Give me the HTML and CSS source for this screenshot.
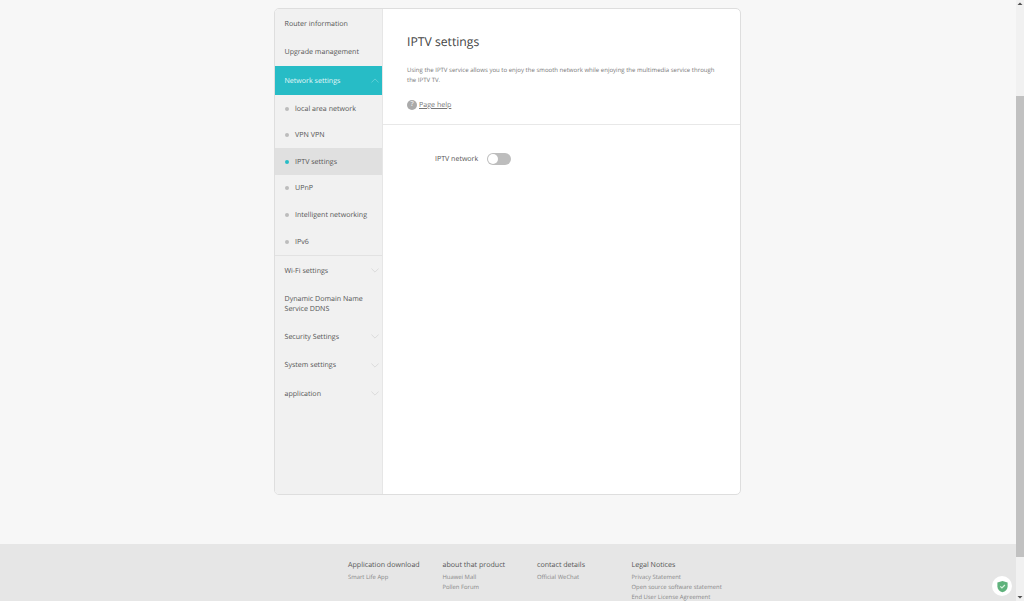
FILE: index.html
```html
<!DOCTYPE html>
<html lang="en">
<head>
  <meta charset="UTF-8">
  <meta name="viewport" content="width=device-width, initial-scale=1.0">
  <title>IPTV settings</title>
  <link rel="stylesheet" href="styles.css">
</head>
<body>

  <div class="page">
    <main class="main">
      <div class="card">
        <nav class="sidebar">
          <a class="nav-item">Router information</a>
          <a class="nav-item">Upgrade management</a>
          <a class="nav-item active">Network settings
            <svg class="chevron" viewBox="0 0 10 6"><path d="M0.5 5.5L5 1l4.5 4.5"/></svg>
          </a>
          <div class="sub-list">
            <a class="sub-item"><span class="dot"></span>local area network</a>
            <a class="sub-item"><span class="dot"></span>VPN VPN</a>
            <a class="sub-item current"><span class="dot"></span>IPTV settings</a>
            <a class="sub-item"><span class="dot"></span>UPnP</a>
            <a class="sub-item"><span class="dot"></span>Intelligent networking</a>
            <a class="sub-item"><span class="dot"></span>IPv6</a>
          </div>
          <a class="nav-item">Wi-Fi settings
            <svg class="chevron" viewBox="0 0 10 6"><path d="M0.5 0.5L5 5l4.5-4.5"/></svg>
          </a>
          <a class="nav-item tall">Dynamic Domain Name<br>Service DDNS</a>
          <a class="nav-item">Security Settings
            <svg class="chevron" viewBox="0 0 10 6"><path d="M0.5 0.5L5 5l4.5-4.5"/></svg>
          </a>
          <a class="nav-item">System settings
            <svg class="chevron" viewBox="0 0 10 6"><path d="M0.5 0.5L5 5l4.5-4.5"/></svg>
          </a>
          <a class="nav-item">application
            <svg class="chevron" viewBox="0 0 10 6"><path d="M0.5 0.5L5 5l4.5-4.5"/></svg>
          </a>
        </nav>

        <section class="content">
          <header class="content-head">
            <h1>IPTV settings</h1>
            <p>Using the IPTV service allows you to enjoy the smooth network while enjoying the multimedia service through the IPTV TV.</p>
            <div class="help">
              <span class="help-icon">?</span>
              <a class="help-link">Page help</a>
            </div>
          </header>
          <div class="form-row">
            <span class="form-label">IPTV network</span>
            <span class="switch"><span class="knob"></span></span>
          </div>
        </section>
      </div>
    </main>

    <footer class="footer">
      <div class="footer-col">
        <h3>Application download</h3>
        <a>Smart Life App</a>
      </div>
      <div class="footer-col">
        <h3>about that product</h3>
        <a>Huawei Mall</a>
        <a>Pollen Forum</a>
      </div>
      <div class="footer-col">
        <h3>contact details</h3>
        <a>Official WeChat</a>
      </div>
      <div class="footer-col">
        <h3>Legal Notices</h3>
        <a>Privacy Statement</a>
        <a>Open source software statement</a>
        <a>End User License Agreement</a>
      </div>
    </footer>

    <div class="shield-badge">
      <svg viewBox="0 0 14 14" width="13" height="13">
        <path d="M7 1l5.5 1.6v4C12.500 10 10 12.200 7 13.300 4 12.200 1.500 10 1.500 6.600v-4z" fill="#5fb27c"/>
        <path d="M4.600 6.800l1.800 1.800 3.200-3.200" fill="none" stroke="#d9f2e0" stroke-width="1.300"/>
      </svg>
    </div>
  </div>

  <div class="scrollbar">
    <svg class="arrow" viewBox="0 0 8 8"><path d="M4 2.500L6.500 5h-5z"/></svg>
    <div class="track"><div class="thumb"></div></div>
    <svg class="arrow" viewBox="0 0 8 8"><path d="M4 5.500L1.500 3h5z"/></svg>
  </div>

</body>
</html>
```

FILE: styles.css
```css
* {
  margin: 0;
  padding: 0;
  box-sizing: border-box;
}

html, body {
  height: 601px;
  overflow: hidden;
}

body {
  font-family: "Open Sans", "Noto Sans", sans-serif;
  text-rendering: geometricPrecision;
  background: #f7f7f7;
  color: #444;
  display: flex;
}

.page {
  flex: 1;
  position: relative;
  display: flex;
  flex-direction: column;
}

.main {
  height: 544px;
  padding: 8px 0 0 274px;
}

.card {
  width: 467px;
  height: 487px;
  display: flex;
  background: #fff;
  border: 1px solid #dedede;
  border-radius: 5px;
  overflow: hidden;
}

.sidebar {
  width: 108px;
  flex-shrink: 0;
  background: #f1f1f1;
  border-right: 1px solid #e6e6e6;
}

.nav-item {
  height: 28.6px;
  padding: 1px 3px 0 9.500px;
  display: flex;
  align-items: center;
  justify-content: space-between;
  font-size: 7.100px;
  line-height: 10px;
  color: #555;
}

.nav-item.tall {
  height: 37.500px;
  padding-top: 2px;
}

.nav-item.active {
  background: #27bcc6;
  color: #e6f8f9;
}

.chevron {
  width: 8px;
  height: 5px;
  fill: none;
  stroke: #cfcfcf;
  stroke-width: 0.8;
}

.active .chevron {
  stroke: #7fdae0;
}

.sub-list {
  border-bottom: 1px solid #e2e2e2;
  height: 161px;
}

.sub-item {
  height: 26.600px;
  padding: 1px 0 0 10px;
  display: flex;
  align-items: center;
  gap: 6px;
  font-size: 7.100px;
  color: #555;
}

.sub-item.current {
  background: #e0e0e0;
}

.dot {
  width: 4px;
  height: 4px;
  border-radius: 50%;
  background: #bcbcbc;
}

.current .dot {
  background: #27bcc6;
}

.content {
  flex: 1;
}

.content-head {
  height: 116px;
  padding: 24px 24px 0;
  border-bottom: 1px solid #e8e8e8;
}

.content-head h1 {
  font-size: 12.200px;
  font-weight: 400;
  line-height: 17px;
  color: #444;
  margin-bottom: 15px;
}

.content-head p {
  font-size: 6.050px;
  line-height: 10px;
  color: #777;
}

.help {
  margin-top: 15px;
  display: flex;
  align-items: center;
  gap: 2px;
}

.help-icon {
  width: 10px;
  height: 10px;
  border-radius: 50%;
  background: #aaa;
  color: #eee;
  font-size: 7px;
  font-weight: 600;
  line-height: 10px;
  text-align: center;
}

.help-link {
  font-size: 7.100px;
  color: #777;
  text-decoration: underline;
}

.form-row {
  margin-top: 28px;
  padding-left: 52px;
  display: flex;
  align-items: center;
  gap: 9px;
}

.form-label {
  font-size: 7.050px;
  color: #555;
}

.switch {
  width: 24px;
  height: 12px;
  padding: 1px;
  border-radius: 6px;
  background: #bdbdbd;
}

.knob {
  display: block;
  width: 10px;
  height: 10px;
  border-radius: 50%;
  background: #fff;
}

.footer {
  height: 57px;
  background: #e6e6e6;
  padding: 16px 0 0 348px;
  display: flex;
  overflow: hidden;
}

.footer-col {
  width: 94.500px;
  display: flex;
  flex-direction: column;
  flex-shrink: 0;
}

.footer-col h3 {
  font-size: 7.100px;
  font-weight: 400;
  line-height: 11px;
  color: #555;
  white-space: nowrap;
  margin-bottom: 2px;
}

.footer-col a {
  font-size: 5.900px;
  line-height: 9.800px;
  color: #888;
  white-space: nowrap;
}

.shield-badge {
  position: absolute;
  right: 4px;
  top: 576px;
  width: 20px;
  height: 20px;
  border-radius: 50%;
  background: #fff;
  display: flex;
  align-items: center;
  justify-content: center;
}

.scrollbar {
  width: 8px;
  flex-shrink: 0;
  background: #f1f1f1;
  display: flex;
  flex-direction: column;
}

.arrow {
  width: 8px;
  height: 8px;
  fill: #505050;
  flex-shrink: 0;
}

.track {
  flex: 1;
  padding-top: 88px;
}

.thumb {
  height: 461px;
  background: #c1c1c1;
}
```
